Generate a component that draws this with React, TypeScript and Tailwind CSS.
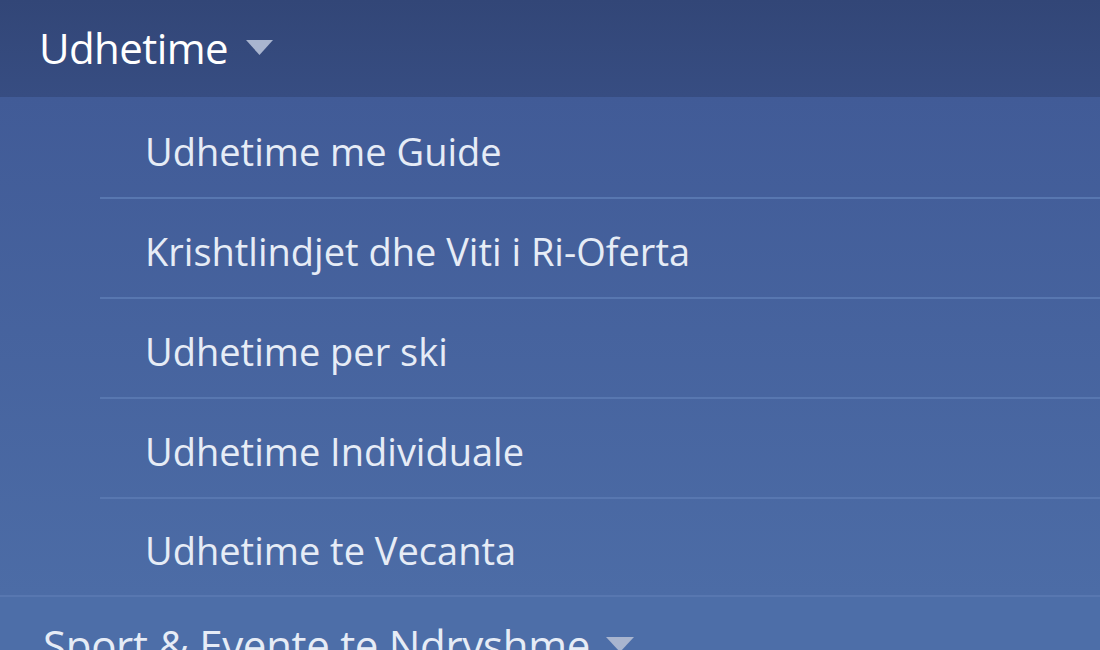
export default function App() {
  const items = [
    'Udhetime me Guide',
    'Krishtlindjet dhe Viti i Ri-Oferta',
    'Udhetime per ski',
    'Udhetime Individuale',
    'Udhetime te Vecanta',
  ];

  return (
    <div
      className="w-[1100px] h-[650px] overflow-hidden bg-[#4a68a2]"
      style={{ fontFamily: '"Open Sans", "Noto Sans", sans-serif' }}
    >
      <div className="h-[97px] bg-gradient-to-b from-[#324677] to-[#374d82] flex items-center pl-[39px] pb-[2px]">
        <span className="text-white text-[42px] font-medium tracking-[-0.6px]">Udhetime</span>
        <svg className="ml-[18px]" width="27" height="16" viewBox="0 0 27 16">
          <polygon points="0,0 27,0 13.5,15" fill="#a9b5cf" />
        </svg>
      </div>
      <div className="bg-gradient-to-b from-[#415b97] to-[#4c6ca6] pt-[2px]">
        <ul className="pl-[100px]">
          {items.map((item, i) => (
            <li
              key={item}
              className={
                'flex items-center pl-[45px] pt-[6px] text-[#e6ecf6] text-[38px] font-medium ' +
                (i < items.length - 1 ? 'h-[100px] border-b-2 border-[#5877b0]' : 'h-[96px]')
              }
            >
              {item}
            </li>
          ))}
        </ul>
      </div>
      <div className="border-t-2 border-[#5877b0] h-[100px] flex items-start pt-[16px] pl-[43px] bg-[#4d6ea8]">
        <span className="text-[#e6ecf6] text-[42px] font-medium tracking-[-0.3px]">Sport &amp; Evente te Ndryshme</span>
        <svg className="ml-[16px] mt-[24px]" width="28" height="16" viewBox="0 0 28 16">
          <polygon points="0,0 28,0 14,15" fill="#a9b5cf" />
        </svg>
      </div>
    </div>
  );
}
